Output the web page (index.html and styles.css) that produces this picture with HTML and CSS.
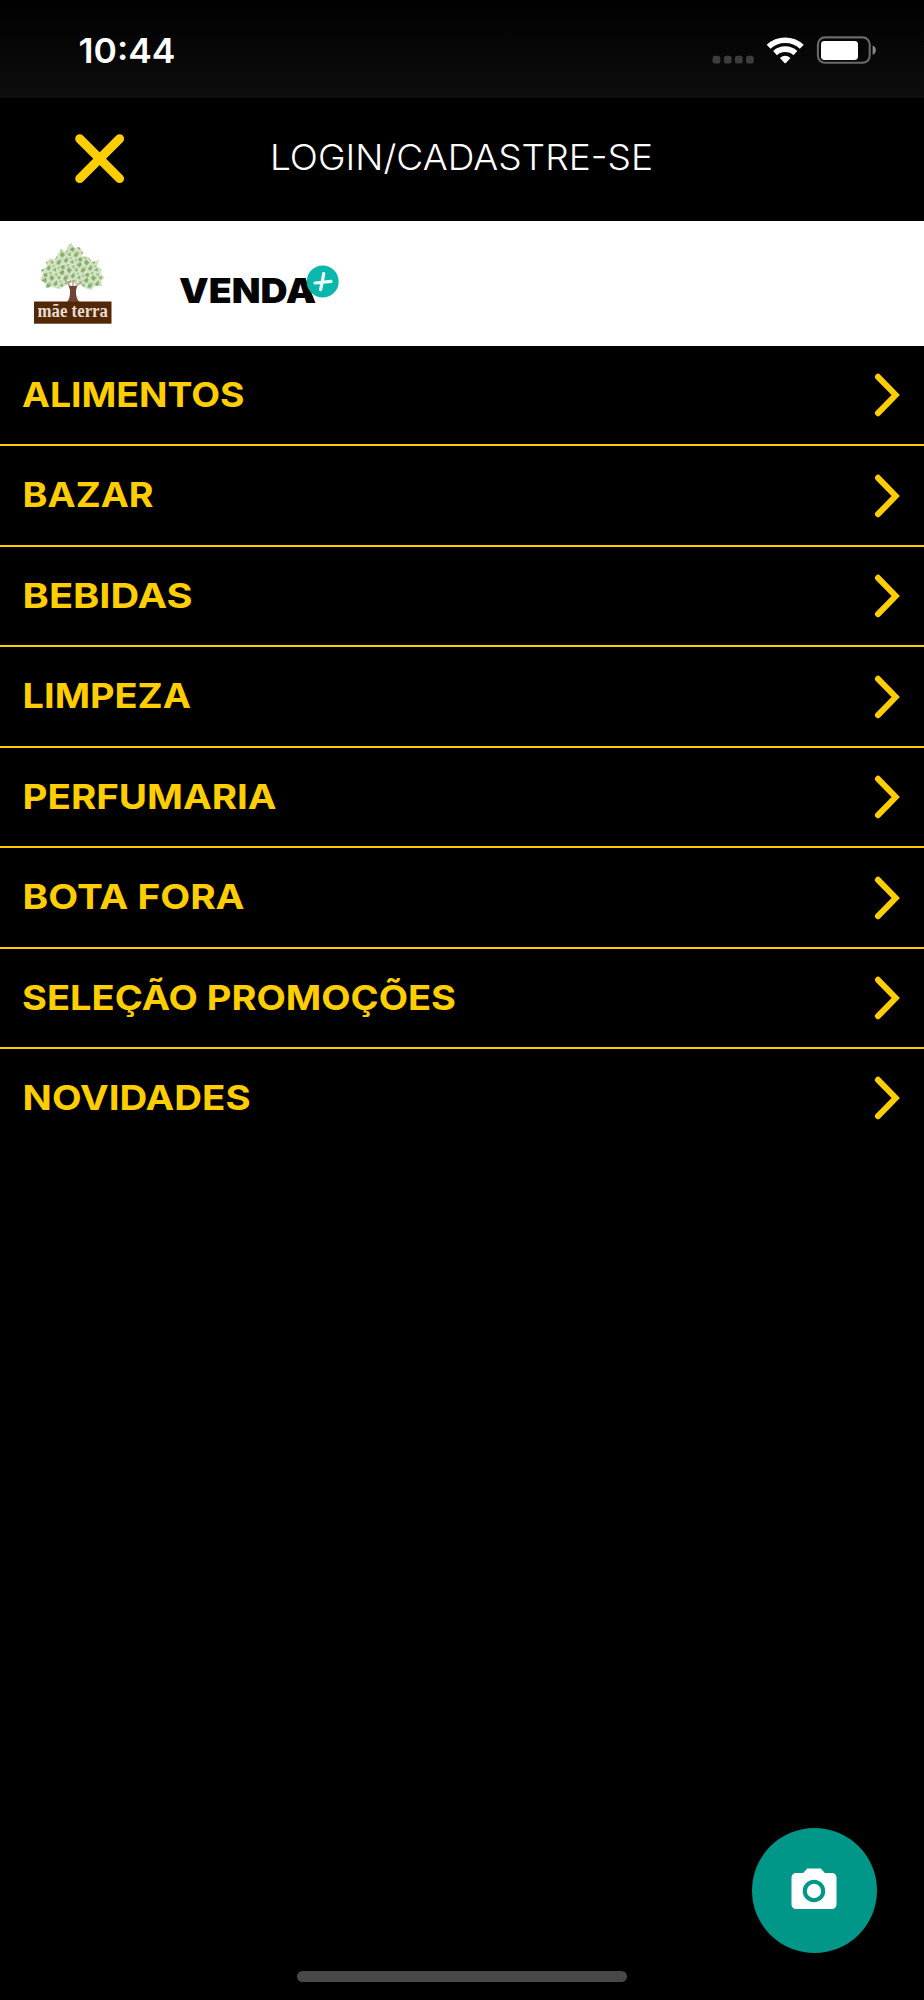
FILE: index.html
```html
<!DOCTYPE html>
<html lang="pt-BR">
<head>
<meta charset="utf-8">
<title>Menu</title>
<link rel="stylesheet" href="styles.css">
</head>
<body>
<div class="screen">
  <div class="status">
    <svg class="time" width="110" height="98"><text x="78.5" y="63" textLength="97" lengthAdjust="spacingAndGlyphs">10:44</text></svg>
    <svg class="indicators" width="234" height="98" viewBox="690 0 234 98">
      <g fill="#3d3d3e"><rect x="712.6" y="55.8" width="7.8" height="7.8" rx="2.6"/><rect x="723.8" y="55.8" width="7.8" height="7.8" rx="2.6"/><rect x="734.9" y="55.8" width="7.8" height="7.8" rx="2.6"/><rect x="746" y="55.8" width="7.8" height="7.8" rx="2.6"/></g>
      <g fill="none" stroke="#fff" stroke-width="5.6"><path d="M768.6 46.8A24.2 24.2 0 0 1 801.8 46.8"/><path d="M775 53.1A15.2 15.2 0 0 1 795.4 53.1"/></g>
      <path fill="#fff" d="M779.9 58.1Q785.2 53.3 790.5 58.1L785.9 63Q785.2 63.7 784.5 63Z"/>
      <rect x="817.9" y="37.4" width="51.8" height="25.4" rx="7" fill="none" stroke="#69696a" stroke-width="2.1"/>
      <rect x="821" y="41" width="37" height="19" rx="3.4" fill="#fff"/>
      <path fill="#8a8a8a" d="M872.6 45.6Q875.8 47 875.8 50.2T872.6 54.8Z"/>
    </svg>
  </div>
  <header class="header">
    <svg class="close" width="50" height="50" viewBox="0 0 50 50"><path d="M4.7 4.7L44.6 44.6M44.6 4.7L4.7 44.6"/></svg>
    <svg class="login" width="390" height="123"><text x="0" y="72" textLength="383" lengthAdjust="spacingAndGlyphs">LOGIN/CADASTRE-SE</text></svg>
  </header>
  <div class="brands">
    <svg class="mae" width="78" height="84" viewBox="34 242 78 84">
      <defs>
        <pattern id="leaves" width="19" height="17" patternUnits="userSpaceOnUse" patternTransform="rotate(-24)">
          <rect width="19" height="17" fill="#d6e5c9"/>
          <path fill="#82ad64" d="M0 1L5 0L5 3L2 5ZM8 2L11 0L13 4L9 6ZM1 9L4 6L7 9L3 11ZM9 9L14 7L13 11L10 12ZM15 5L19 4L17 8ZM4 13L8 13L7 17L4 16ZM14 13L18 12L17 16Z"/>
          <path fill="#9fc283" d="M14 0L18 1L15 4ZM5 5L8 7L7 9ZM15 9L19 9L16 11ZM0 13L3 12L2 16ZM9 14L13 14L11 17Z"/>
        </pattern>
      </defs>
      <path class="crown" fill="url(#leaves)" d="M71 243L74 248L79 247L83 252L82 256L89 257L92 262L99 260L97 266L102 270L100 274L105 277L101 281L102 286L95 286L91 290L85 288L81 285L76 284L72 282L66 285L60 289L52 287L46 288L45 283L40 280L43 274L41 270L47 267L46 262L52 258L54 261L58 254L61 249L66 252L67 247Z"/>
      <path fill="#6f4635" d="M67 302Q70.5 298 70 290L68 284L71 286H75L78 284L76 290Q75.5 298 79.5 302Z"/>
      <path fill="none" stroke="#b99a8d" stroke-width="1.4" d="M70 286L65 280M76 286L82 282M73 286V280"/>
      <rect x="34" y="301.5" width="77.5" height="22.2" fill="#532807"/>
      <text class="mae-name" x="37.5" y="317.3" textLength="70.5" lengthAdjust="spacingAndGlyphs">mãe terra</text>
    </svg>
    <svg class="venda" width="162" height="60" viewBox="179 262 162 60">
      <text class="venda-name" x="179" y="303" textLength="136.5" lengthAdjust="spacingAndGlyphs">VENDA</text>
      <circle cx="322.7" cy="281.5" r="16.8" fill="#fff"/>
      <path class="venda-leg" d="M301 283L305.5 278.2L315.5 303H308.5Z"/>
      <circle cx="322.7" cy="281.5" r="16" fill="#0bb7ab"/>
      <path class="plus" d="M323.7 273.5Q322.6 281 320.6 289.6M315 283L331 281.4"/>
    </svg>
  </div>
  <nav class="menu">
    <a class="item"><svg class="label" width="480" height="98"><text x="22" y="60.8" textLength="222.5" lengthAdjust="spacingAndGlyphs">ALIMENTOS</text></svg><svg class="chevron" width="28" height="46" viewBox="0 0 28 46"><path d="M5 4.8L22.7 23L5 41.2"/></svg></a>
    <a class="item"><svg class="label" width="480" height="98"><text x="22.6" y="60.8" textLength="131" lengthAdjust="spacingAndGlyphs">BAZAR</text></svg><svg class="chevron" width="28" height="46" viewBox="0 0 28 46"><path d="M5 4.8L22.7 23L5 41.2"/></svg></a>
    <a class="item"><svg class="label" width="480" height="98"><text x="22.6" y="60.8" textLength="170" lengthAdjust="spacingAndGlyphs">BEBIDAS</text></svg><svg class="chevron" width="28" height="46" viewBox="0 0 28 46"><path d="M5 4.8L22.7 23L5 41.2"/></svg></a>
    <a class="item"><svg class="label" width="480" height="98"><text x="22.6" y="60.8" textLength="168.5" lengthAdjust="spacingAndGlyphs">LIMPEZA</text></svg><svg class="chevron" width="28" height="46" viewBox="0 0 28 46"><path d="M5 4.8L22.7 23L5 41.2"/></svg></a>
    <a class="item"><svg class="label" width="480" height="98"><text x="22.6" y="60.8" textLength="254" lengthAdjust="spacingAndGlyphs">PERFUMARIA</text></svg><svg class="chevron" width="28" height="46" viewBox="0 0 28 46"><path d="M5 4.8L22.7 23L5 41.2"/></svg></a>
    <a class="item"><svg class="label" width="480" height="98"><text x="22.6" y="60.8" textLength="222" lengthAdjust="spacingAndGlyphs">BOTA FORA</text></svg><svg class="chevron" width="28" height="46" viewBox="0 0 28 46"><path d="M5 4.8L22.7 23L5 41.2"/></svg></a>
    <a class="item"><svg class="label" width="480" height="98"><text x="22" y="60.8" textLength="434" lengthAdjust="spacingAndGlyphs">SELEÇÃO PROMOÇÕES</text></svg><svg class="chevron" width="28" height="46" viewBox="0 0 28 46"><path d="M5 4.8L22.7 23L5 41.2"/></svg></a>
    <a class="item"><svg class="label" width="480" height="98"><text x="22.6" y="60.8" textLength="228" lengthAdjust="spacingAndGlyphs">NOVIDADES</text></svg><svg class="chevron" width="28" height="46" viewBox="0 0 28 46"><path d="M5 4.8L22.7 23L5 41.2"/></svg></a>
  </nav>
  <button class="fab" aria-label="Câmera"><svg width="54" height="54" viewBox="0 0 24 24" fill="#fff"><circle cx="12" cy="12" r="3.2"/><path d="M9 2L7.17 4H4c-1.1 0-2 .9-2 2v12c0 1.1.9 2 2 2h16c1.1 0 2-.9 2-2V6c0-1.1-.9-2-2-2h-3.17L15 2H9zm3 15c-2.76 0-5-2.24-5-5s2.24-5 5-5 5 2.24 5 5-2.24 5-5 5z"/></svg></button>
  <div class="home"></div>
</div>
</body>
</html>
```

FILE: styles.css
```css
* { box-sizing: border-box; }
body { margin: 0; background: #000; }
svg { display: block; flex: none; overflow: visible; }
.screen {
  position: relative;
  width: 924px;
  height: 2000px;
  overflow: hidden;
  background: #000;
  font-family: Inter, "Liberation Sans", sans-serif;
}
.status {
  display: flex;
  justify-content: space-between;
  height: 98px;
  background: linear-gradient(#000, #0d0d0d);
}
.time text { font-size: 34.5px; font-weight: 600; fill: #fff; }
.header {
  display: flex;
  align-items: flex-start;
  height: 123px;
}
.close { margin: 36px 0 0 74.5px; }
.close path { stroke: #ffce00; stroke-width: 9; stroke-linecap: round; }
.login { margin-left: 145.5px; }
.login text { font-size: 35px; font-weight: 300; fill: #fff; }
.brands {
  display: flex;
  align-items: flex-start;
  height: 125px;
  padding: 21px 0 0 34px;
  background: #fff;
}
.venda { margin: 20px 0 0 67px; }
.crown { filter: blur(0.5px); }
.mae-name {
  font-family: "Liberation Serif", serif;
  font-size: 19px;
  font-weight: 700;
  fill: #e9dcd2;
}
.venda-name { font-size: 34.5px; font-weight: 900; fill: #050505; }
.venda-leg { fill: #050505; }
.plus { fill: none; stroke: #f2fffd; stroke-width: 3.2; stroke-linecap: round; }
.item {
  display: flex;
  justify-content: space-between;
  height: 100.43px;
  border-bottom: 2px solid #fc0;
}
.item:last-child { border-bottom: 0; }
.label text { font-size: 34.6px; font-weight: 700; fill: #ffce00; }
.chevron { margin: 26.4px 23.2px 0 0; }
.chevron path {
  fill: none;
  stroke: #ffce00;
  stroke-width: 6;
  stroke-linecap: round;
  stroke-linejoin: miter;
}
.fab {
  position: absolute;
  left: 752px;
  top: 1828px;
  display: flex;
  align-items: center;
  justify-content: center;
  width: 125px;
  height: 125px;
  padding: 0 1px 0 0;
  border: 0;
  border-radius: 50%;
  background: #009688;
}
.home {
  position: absolute;
  left: 297px;
  top: 1971px;
  width: 330px;
  height: 11px;
  border-radius: 6px;
  background: #484848;
}
```
